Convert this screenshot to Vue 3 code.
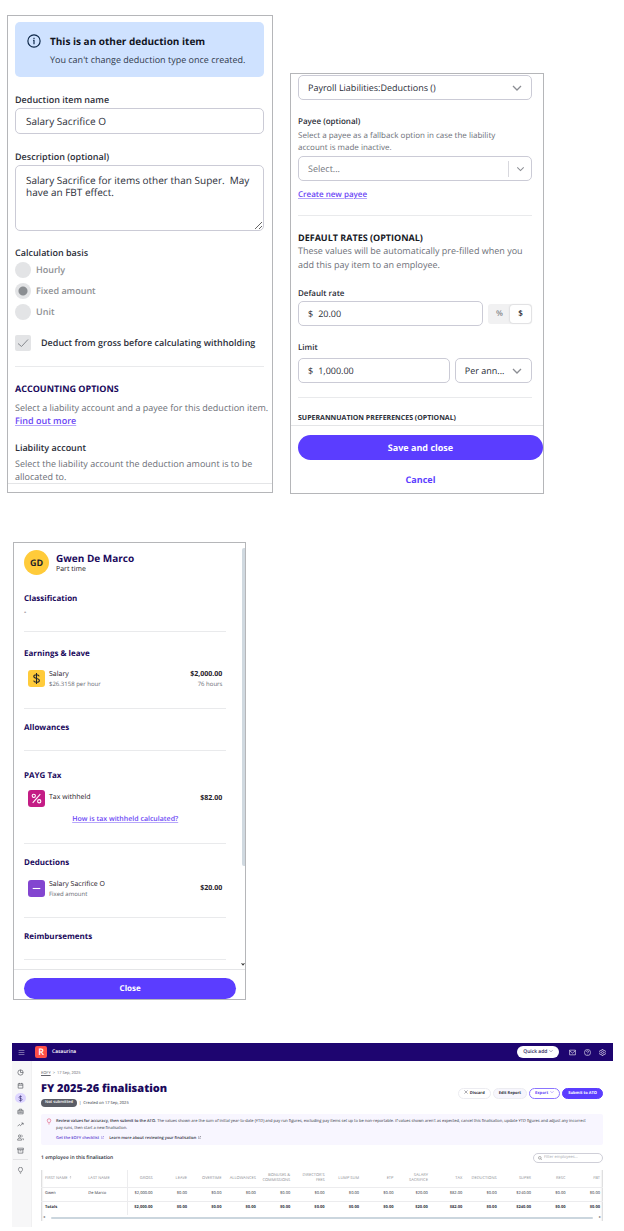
<script setup>
import { ref } from 'vue'

const name = ref('Salary Sacrifice O')
const description = ref('Salary Sacrifice for items other than Super.  May have an FBT effect.')
const basis = ref('Fixed amount')
const bases = ['Hourly', 'Fixed amount', 'Unit']
const rate = ref('20.00')
const limit = ref('1,000.00')
const filter = ref('')

const columns = [
  { label: 'GROSS', value: '$2,000.00' },
  { label: 'LEAVE', value: '$0.00' },
  { label: 'OVERTIME', value: '$0.00' },
  { label: 'ALLOWANCES', value: '$0.00' },
  { label: 'BONUSES &\nCOMMISSIONS', value: '$0.00' },
  { label: "DIRECTOR'S\nFEES", value: '$0.00' },
  { label: 'LUMP SUM', value: '$0.00' },
  { label: 'ETP', value: '$0.00' },
  { label: 'SALARY\nSACRIFICE', value: '$20.00' },
  { label: 'TAX', value: '$82.00' },
  { label: 'DEDUCTIONS', value: '$0.00' },
  { label: 'SUPER', value: '$240.00' },
  { label: 'RESC', value: '$0.00' },
  { label: 'FBT', value: '$0.00' },
]

const navIcons = [
  { label: 'Dashboard', d: 'M12 3a9 9 0 1 0 9 9A9 9 0 0 0 12 3v9h9' },
  { label: 'Calendar', d: 'M4 6h16v15H4zM4 11h16M8 3v4M16 3v4' },
  { label: 'Payroll', d: 'M17 7c-1-2-3-2.500-5-2.500-3 0-5 1.500-5 3.700 0 5.300 10.500 2.300 10.500 7.600 0 2.300-2.300 3.700-5.500 3.700-2.500 0-4.500-.7-5.500-3M12 1.500v21', active: true },
  { label: 'Business', d: 'M3 8h18v12H3zM8 8V4h8v4M3 14h18M10 12v4M14 12v4' },
  { label: 'Reports', d: 'M2 18l6-6 4 4 9-9M15 7h6v6' },
  { label: 'People', d: 'M9 11a4 4 0 1 0 0-8 4 4 0 0 0 0 8M2 21c0-5 3-7 7-7s7 2 7 7zM16 3.500a4 4 0 0 1 0 7M19 14c2 1 3 3 3 7' },
  { label: 'Archive', d: 'M2 4h20v5H2zM4 9v12h16V9M9 13h6' },
]
</script>

<template>
  <main class="page">
    <div class="forms">
      <section class="card deduction">
        <div class="banner">
          <svg class="info" viewBox="0 0 24 24" fill="none" stroke="currentColor" stroke-width="2"><circle cx="12" cy="12" r="10.500" /><path d="M10.500 11H12v6.500M12 6.500v2" /></svg>
          <div>
            <h2>This is an other deduction item</h2>
            <p>You can't change deduction type once created.</p>
          </div>
        </div>

        <label class="label" for="item-name">Deduction item name</label>
        <input id="item-name" v-model="name" class="field" type="text" />

        <label class="label" for="item-desc">Description (optional)</label>
        <textarea id="item-desc" v-model="description" class="field area"></textarea>

        <fieldset class="basis">
          <legend class="label">Calculation basis</legend>
          <label v-for="b in bases" :key="b" class="radio">
            <input v-model="basis" type="radio" name="basis" :value="b" disabled />{{ b }}
          </label>
        </fieldset>

        <label class="check">
          <span class="tick">
            <input type="checkbox" checked disabled />
            <svg viewBox="0 0 16 16" fill="none" stroke="currentColor" stroke-width="1"><path d="M3 8.500l3.500 3L13 4.500" /></svg>
          </span>
          Deduct from gross before calculating withholding
        </label>

        <hr />
        <h3 class="caps">ACCOUNTING OPTIONS</h3>
        <p class="para single">Select a liability account and a payee for this deduction item.<br /><a class="link" href="#find">Find out more</a></p>
        <h4 class="label liability">Liability account</h4>
        <p class="para hint">Select the liability account the deduction amount is to be allocated to.</p>
        <div class="edge"></div>
      </section>

      <section class="card rates">
        <div class="inner">
          <div class="select">
            <select aria-label="Liability account"><option>Payroll Liabilities:Deductions ()</option></select>
            <svg viewBox="0 0 10 10"><path d="M1 3l4 4 4-4" /></svg>
          </div>
          <label class="label payee" for="payee">Payee (optional)</label>
          <p class="small">Select a payee as a fallback option in case the liability<br />account is made inactive.</p>
          <div class="select split">
            <select id="payee"><option>Select...</option></select>
            <svg viewBox="0 0 10 10"><path d="M1 3l4 4 4-4" /></svg>
          </div>
          <a class="link create" href="#payee">Create new payee</a>
          <hr class="rule-a" />
          <h3 class="caps dark">DEFAULT RATES (OPTIONAL)</h3>
          <p class="lead">These values will be automatically pre-filled when you add this pay item to an employee.</p>

          <label class="label rate-label" for="rate">Default rate</label>
          <div class="line">
            <div class="money"><span>$</span><input id="rate" v-model="rate" type="text" /></div>
            <div class="toggle"><button type="button">%</button><button type="button" class="on">$</button></div>
          </div>
          <label class="label rate-label" for="limit">Limit</label>
          <div class="line limit">
            <div class="money"><span>$</span><input id="limit" v-model="limit" type="text" /></div>
            <div class="select period">
              <select aria-label="Limit period"><option>Per ann...</option></select>
              <svg viewBox="0 0 10 10"><path d="M1 3l4 4 4-4" /></svg>
            </div>
          </div>
          <hr class="rule-b" />
          <h4 class="super">SUPERANNUATION PREFERENCES (OPTIONAL)</h4>
        </div>
        <div class="footer">
          <button type="button" class="primary">Save and close</button>
          <button type="button" class="cancel">Cancel</button>
        </div>
      </section>
    </div>

    <section class="card employee">
      <div class="scroller">
        <header class="person">
          <span class="avatar">GD</span>
          <div><h2>Gwen De Marco</h2><p>Part time</p></div>
        </header>
        <h3 class="sect first">Classification</h3>
        <p class="dash">-</p>
        <hr class="e1" />
        <h3 class="sect e2">Earnings &amp; leave</h3>
        <div class="item">
          <span class="tile yellow"><svg viewBox="0 0 24 24"><path d="M17 8c-.5-2-2.500-3-5-3-3 0-5 1.300-5 3.400 0 5 10.300 2.200 10.300 7.200 0 2.100-2.300 3.400-5.300 3.400-2.700 0-4.800-1-5.300-3.200M12 2v20" /></svg></span>
          <div class="what"><b>Salary</b><span>$26.3158 per hour</span></div>
          <div class="amount"><b>$2,000.00</b><span>76 hours</span></div>
        </div>
        <hr class="e3" />
        <h3 class="sect e4">Allowances</h3>
        <hr class="e5" />
        <h3 class="sect e6">PAYG Tax</h3>
        <div class="item tax">
          <span class="tile pink"><svg viewBox="0 0 24 24"><circle cx="7" cy="7" r="3" /><circle cx="17" cy="17" r="3" /><path d="M19 4L5 20" /></svg></span>
          <div class="what"><b>Tax withheld</b></div>
          <div class="amount mid"><b>$82.00</b></div>
        </div>
        <p class="how"><a class="link" href="#tax">How is tax withheld calculated?</a></p>
        <hr class="e7" />
        <h3 class="sect e4">Deductions</h3>
        <div class="item ded">
          <span class="tile violet"><svg viewBox="0 0 24 24"><path d="M5 12h14" /></svg></span>
          <div class="what"><b>Salary Sacrifice O</b><span>Fixed amount</span></div>
          <div class="amount mid"><b>$20.00</b></div>
        </div>
        <hr class="e7" />
        <h3 class="sect e4">Reimbursements</h3>
        <hr class="e5" />
        <span class="thumb"></span>
        <svg class="down" viewBox="0 0 6 4"><path d="M0 0h2l1 1.500L4 0h2L3 4z" /></svg>
      </div>
      <div class="close-bar"><button type="button" class="primary close">Close</button></div>
    </section>

    <section class="app">
      <header class="topbar">
        <button type="button" class="burger" aria-label="Menu"><svg viewBox="0 0 12 12"><path d="M1 2.500h10M1 6h10M1 9.500h10" /></svg></button>
        <span class="logo">R</span>
        <span class="org">Casaurina</span>
        <button type="button" class="quick">Quick add <svg viewBox="0 0 10 10"><path d="M1 3l4 4 4-4" /></svg></button>
        <svg class="top-icon" viewBox="0 0 24 24"><path d="M2 4h20v16H2zM2 6l10 8 10-8" /></svg>
        <svg class="top-icon" viewBox="0 0 24 24"><circle cx="12" cy="12" r="10.500" /><path d="M8.500 9.500c0-5 7-4.500 7-.5 0 2.500-3.500 2.500-3.500 5M12 16.500v2" /></svg>
        <svg class="top-icon" viewBox="0 0 24 24"><circle cx="12" cy="12" r="3.500" /><path d="M10 1.500h4l.7 3 2.800 1.400 3-1 2 3.500-2.300 2.200v2.800l2.300 2.200-2 3.500-3-1-2.800 1.400-.7 3h-4l-.7-3-2.800-1.400-3 1-2-3.500 2.300-2.200v-2.800L1.500 8.400l2-3.500 3 1 2.800-1.400z" /></svg>
      </header>

      <nav class="side">
        <a v-for="n in navIcons" :key="n.label" href="#nav" :class="{ active: n.active }" :aria-label="n.label"><svg viewBox="0 0 24 24"><path :d="n.d" /></svg></a>
        <hr />
        <a href="#tips" aria-label="Tips"><svg viewBox="0 0 24 24"><path d="M9 17c0-3-4-4-4-9a7 7 0 0 1 14 0c0 5-4 6-4 9zM10 21h4" /></svg></a>
      </nav>

      <div class="content">
        <div class="head">
          <div>
            <p class="crumbs"><a href="#eofy">EOFY</a><i>&gt;</i>17 Sep, 2025</p>
            <h1>FY 2025-26 finalisation</h1>
            <p class="status"><span class="pill">Not submitted</span><i>|</i>Created on 17 Sep, 2025</p>
          </div>
          <div class="actions">
            <button type="button"><svg viewBox="0 0 10 10"><path d="M1 1l8 8M9 1L1 9" /></svg>Discard</button>
            <button type="button" class="soft">Edit Report</button>
            <button type="button" class="outline">Export<svg viewBox="0 0 10 10"><path d="M1 3l4 4 4-4" /></svg></button>
            <button type="button" class="solid">Submit to ATO</button>
          </div>
        </div>

        <div class="notice">
          <svg class="bulb" viewBox="0 0 24 24"><path d="M9 17c0-3-4-4-4-9a7 7 0 0 1 14 0c0 5-4 6-4 9zM10 22h4" /></svg>
          <div>
            <p><b>Review values for accuracy, then submit to the ATO.</b> The values shown are the sum of initial year-to-date (YTD) and pay run figures, excluding pay items set up to be non-reportable. If values shown aren't as expected, cancel this finalisation, update YTD figures and adjust any incorrect<br />pay runs, then start a new finalisation.</p>
            <p class="links">
              <a class="violet" href="#list">Get the EOFY checklist <svg viewBox="0 0 10 10"><path d="M4 2H1v7h7V6M6 1h3v3M9 1L5 5" /></svg></a>
              <a href="#more">Learn more about reviewing your finalisation <svg viewBox="0 0 10 10"><path d="M4 2H1v7h7V6M6 1h3v3M9 1L5 5" /></svg></a>
            </p>
          </div>
        </div>

        <div class="tools">
          <h2>1 employee in this finalisation</h2>
          <label class="search">
            <svg viewBox="0 0 24 24"><circle cx="11" cy="11" r="8" /><path d="M17 17l6 6" /></svg>
            <input v-model="filter" type="text" placeholder="Filter employees..." aria-label="Filter employees" />
          </label>
        </div>

        <div class="grid">
          <table>
            <colgroup><col class="c-name" /><col class="c-name" /><col class="c-gross" /><col v-for="n in 13" :key="n" /></colgroup>
            <thead>
              <tr>
                <th>FIRST NAME <svg viewBox="0 0 10 10"><path d="M5 9V1M2 4l3-3 3 3" /></svg></th>
                <th class="last">LAST NAME</th>
                <th v-for="c in columns" :key="c.label" class="num">{{ c.label }}</th>
              </tr>
            </thead>
            <tbody>
              <tr><td>Gwen</td><td class="last">De Marco</td><td v-for="c in columns" :key="c.label" class="num">{{ c.value }}</td></tr>
              <tr class="total"><td>Totals</td><td class="last"></td><td v-for="c in columns" :key="c.label" class="num">{{ c.value }}</td></tr>
            </tbody>
          </table>
          <div class="hbar"><i>◂</i><span></span><i>▸</i></div>
        </div>
      </div>
    </section>
  </main>
</template>

<style>
body { margin: 0; background: #fff; }
</style>

<style scoped>
.page, .page * { box-sizing: border-box; }
.page {
  padding: 15px 0 3px;
  font-family: "Open Sans", "Noto Sans", sans-serif;
  font-size: 9px;
  line-height: 12px;
  color: #2b2e38;
  text-rendering: geometricPrecision;
}
h1, h2, h3, h4, p, fieldset, legend { margin: 0; padding: 0; border: 0; }
button, input, select, textarea { font: inherit; color: inherit; margin: 0; text-rendering: inherit; }
button { cursor: pointer; padding: 0; border: 0; background: none; }
hr { border: 0; height: 1px; margin: 0; background: #e9eaec; }
svg { fill: none; stroke: currentColor; }
.card { border: 1px solid #b5b6b9; background: #fff; overflow: hidden; }
.forms {
  display: grid;
  grid-template-columns: minmax(0, 266fr) minmax(0, 254fr);
  gap: 17px;
  align-items: start;
  padding: 0 80px 0 7px;
}
.label { display: block; font-size: 9px; font-weight: 600; line-height: 12px; }
.link { color: #6a45f5; font-weight: 600; text-decoration: underline; text-decoration-color: #b6a6fb; text-underline-offset: 1px; }
.caps { font-size: 9px; font-weight: 700; line-height: 14px; color: #1b0a5c; }
.dark { color: #17191f; }

.deduction { padding: 6px 8px 8px 7px; }
.banner { display: flex; gap: 9px; padding: 12px 12px 10px; border-radius: 5px; background: #cfe2ff; }
.info { width: 14px; height: 14px; flex: none; color: #0d2748; }
.banner h2 { font-size: 10px; line-height: 14px; font-weight: 700; color: #11151f; }
.banner p { margin-top: 5px; font-size: 9px; line-height: 14px; color: #2f3a4c; }
.deduction > .label { margin-top: 17px; }
.field { display: block; width: 100%; height: 26px; margin-top: 2px; padding: 0 10px; border: 1px solid #cbcbd6; border-radius: 5px; background: #fff; font-size: 10px; outline: 0; }
.area { height: 66px; padding: 8px 10px; line-height: 12px; resize: vertical; }
.basis { margin-top: 16px; }
.basis .label { margin-bottom: 3px; }
.radio { display: flex; align-items: center; gap: 5px; height: 16px; margin-bottom: 5px; color: #8e9094; font-weight: 600; }
.radio input { appearance: none; width: 16px; height: 16px; border-radius: 50%; background: #e3e4e6; }
.radio input:checked { background: radial-gradient(circle, #8b8e92 0 4px, #e3e4e6 5px); }
.check { display: flex; align-items: center; gap: 10px; height: 16px; margin-top: 10px; font-weight: 600; white-space: nowrap; }
.tick { display: grid; flex: none; width: 16px; height: 16px; }
.tick > * { grid-area: 1 / 1; width: 16px; height: 16px; }
.tick input { appearance: none; border-radius: 2px; background: #e3e4e6; }
.tick svg { color: #85888d; }
.deduction hr { margin: 15px 0; }
.para { margin-top: 5px; line-height: 13px; color: #6c6f77; }
.single { white-space: nowrap; }
.liability.liability { margin-top: 15px; }
.hint { margin-top: 3px; }
.edge { height: 1px; margin: 0 -8px 0 -7px; background: #e4e5e7; }

.rates { margin-top: 58px; padding: 1px 0 6px; }
.inner { padding: 0 11px 0 7px; }
.select { display: grid; align-items: center; }
.select > * { grid-area: 1 / 1; }
.select select { appearance: none; width: 100%; height: 25px; padding: 0 22px 0 9px; border: 1px solid #cbcbd6; border-radius: 5px; background: #fff; font-size: 9px; outline: 0; }
.select svg { justify-self: end; width: 10px; height: 10px; margin-right: 10px; color: #8b8d93; stroke-width: 1.3; pointer-events: none; }
.split select { color: #74777e; }
.split svg { width: 24px; height: 16px; margin-right: 0; padding: 4px 0; border-left: 1px solid #d8d8de; }
.period.period select { padding-right: 18px; }
.payee { margin-top: 16px; font-size: 8px; }
.small { margin: 2px 0; font-size: 8px; line-height: 12px; color: #6c6f77; }
.create { display: block; margin-top: 8px; font-size: 8px; }
.rule-a { margin: 14px 0 15px; }
.rates .caps { line-height: 13px; }
.lead { margin-right: -4px; line-height: 14px; color: #6c6f77; }
.rate-label { margin-top: 16px; font-size: 8px; }
.line { display: flex; align-items: center; gap: 5px; margin-top: 1px; }
.limit { margin-top: 4px; }
.money { display: flex; align-items: center; flex: 1; gap: 5px; height: 25px; padding: 0 9px; border: 1px solid #cbcbd6; border-radius: 5px; }
.money input { flex: 1; width: 0; padding: 0; border: 0; outline: 0; background: none; }
.toggle { display: flex; height: 20px; padding: 1px; border-radius: 3px; background: #f1f1f2; font-size: 8px; font-weight: 600; }
.toggle button { width: 21px; color: #85878c; }
.toggle .on { color: #24262c; border-radius: 3px; background: #fff; box-shadow: 0 0 2px #b9babd; }
.period { flex: 0 0 33%; }
.rule-b { margin: 14px 0 16px; }
.super { font-size: 7px; line-height: 10px; font-weight: 700; white-space: nowrap; }
.footer { margin-top: 1px; padding: 9px 0 0 7px; border-top: 1px solid #e4e5e7; }
.primary { display: block; width: 100%; height: 25px; border-radius: 13px; background: #5b3dff; color: #fff; font-weight: 700; }
.cancel { display: block; width: 100%; margin-top: 13px; line-height: 14px; font-weight: 700; color: #5b3dff; }

.employee { width: 37.4%; margin: 48px 0 0 13px; color: #1f2228; }
.scroller { position: relative; padding: 7px 19px 9px 10px; }
.person { display: flex; align-items: flex-start; gap: 7px; }
.avatar { width: 25px; height: 25px; flex: none; border-radius: 50%; background: #ffcb3a; text-align: center; font-size: 9px; font-weight: 700; line-height: 25px; }
.person h2 { margin-top: 1px; font-size: 10px; line-height: 14px; color: #1b0a5c; }
.person p { font-size: 7px; line-height: 10px; }
.sect { font-size: 8px; line-height: 12px; color: #1b0a5c; }
.first { margin-top: 18px; }
.dash { margin-top: 3px; line-height: 10px; font-size: 7px; }
.e1 { margin-top: 13px; }
.e2 { margin-top: 16px; }
.e3 { margin-top: 19px; }
.e4 { margin-top: 13px; }
.e5 { margin-top: 16px; }
.e6 { margin-top: 19px; }
.e7 { margin-top: 18px; }
.item { display: flex; gap: 4px; height: 19px; margin-top: 10px; padding: 0 4px; font-size: 7px; }
.tax { margin-top: 8px; height: 25px; }
.ded { margin-top: 11px; }
.tile { display: grid; place-items: center; flex: none; width: 17px; height: 17px; border-radius: 3px; }
.tile svg { width: 13px; height: 13px; stroke-width: 2; }
.yellow { background: #ffcb3a; }
.pink { background: #c41d85; color: #fff; }
.tile.violet { background: #8345d0; color: #fff; }
.what, .amount { display: flex; flex-direction: column; line-height: 10px; }
.what { flex: 1; }
.tax .what { margin-top: 3px; }
.what b { font-weight: 400; }
.what span, .amount span { font-size: 6px; line-height: 9px; color: #666971; }
.amount { text-align: right; }
.amount b { font-weight: 700; }
.amount.mid { margin-top: 4px; }
.how { text-align: center; font-size: 7px; line-height: 10px; }
.thumb { position: absolute; top: 5px; right: 0; width: 3px; height: 318px; border-radius: 2px 0 0 2px; background: #d0d9e0; }
.down { position: absolute; right: 0; bottom: 3px; width: 4px; height: 3px; fill: #333; stroke: none; }
.close-bar { padding: 8px 9px 0 10px; border-top: 1px solid #e4e5e7; }
.close { height: 21px; font-size: 8px; border-radius: 11px; }

.app {
  display: grid;
  grid-template-columns: 20px minmax(0, 1fr);
  margin: 43px 11px 0 12px;
  font-size: 4px;
  line-height: 7px;
}
.topbar { grid-column: 1 / -1; display: flex; align-items: center; height: 18px; padding-right: 7px; background: #1e0570; color: #fff; }
.burger { width: 20px; height: 10px; }
.burger svg { display: block; width: 7px; height: 7px; margin: 1px 6px; opacity: 0.7; }
.logo { width: 12px; height: 12px; margin: 0 5px 0 3px; border-radius: 2px; background: #ff4f48; text-align: center; font-size: 9px; font-weight: 600; line-height: 12px; }
.org { flex: 1; font-size: 5px; font-weight: 600; }
.quick { width: 42px; height: 12px; border-radius: 6px; background: #fff; color: #28245a; font-size: 5px; font-weight: 600; line-height: 12px; }
.quick svg { width: 4px; height: 4px; }
.top-icon { width: 7px; height: 7px; margin-left: 8px; stroke-width: 2; }
.quick + .top-icon { margin-left: 10px; }
.side { display: flex; flex-direction: column; align-items: center; gap: 3px; padding: 6px 2px 0 0; background: #f7f7f8; border-right: 1px solid #f0f0f1; }
.side a { display: grid; place-items: center; width: 11px; height: 10px; border-radius: 50%; color: #44464d; }
.side .active { background: #ddd5ff; color: #29206a; }
.side svg { width: 7px; height: 7px; stroke-width: 2; }
.side hr { width: 15px; margin: 1px 0 2px; background: #e2e2e4; }
.content { padding: 10px 10px 6px 9px; min-width: 0; }
.head { display: flex; justify-content: space-between; align-items: flex-end; }
.crumbs { line-height: 6px; color: #62646b; }
.crumbs a { color: inherit; }
i { font-style: normal; }
.crumbs i { margin: 0 2px; }
h1 { margin: 5px 0 3px; font-size: 11px; line-height: 14px; font-weight: 800; color: #1b0a5c; }
.status { display: flex; align-items: center; height: 8px; }
.status i { margin: 0 2px; }
.pill { height: 8px; padding: 0 4px; border-radius: 4px; background: #5a5d66; color: #fff; font-weight: 600; line-height: 8px; }
.actions { display: flex; gap: 2px; margin-bottom: 8px; }
.actions button { height: 11px; padding: 0 5px; border: 1px solid #ececf1; border-radius: 6px; font-weight: 700; line-height: 9px; color: #33333f; white-space: nowrap; }
.actions svg { width: 4px; height: 4px; margin: 0 2px 0 0; }
.actions .soft { background: #f7f6fd; }
.actions .outline { border-color: #8b75ff; color: #6a45f5; }
.actions .outline svg { margin: 0 0 0 2px; }
.actions .solid { border-color: #5b3dff; background: #5b3dff; color: #fff; }
.notice { display: flex; gap: 4px; margin-top: 7px; padding: 4px 4px 3px 5px; border-radius: 2px; background: #f8f6ff; }
.notice > div { white-space: nowrap; }
.notice b { font-weight: 600; }
.bulb { width: 6px; height: 7px; flex: none; color: #d9345a; stroke-width: 2; }
.links { display: flex; gap: 5px; margin-top: 3px; font-weight: 600; }
.links a { color: #33333f; text-decoration: none; }
.links .violet { color: #5a3bd0; }
.links svg { width: 3px; height: 3px; margin-left: 1px; stroke-width: 1; }
.tools { display: flex; justify-content: space-between; align-items: center; margin-top: 8px; }
.tools h2 { font-size: 5px; line-height: 7px; font-weight: 600; }
.search { display: flex; align-items: center; gap: 2px; width: 70px; height: 10px; padding: 0 4px; border: 1px solid #cfcfd8; border-radius: 5px; }
.search svg { width: 4px; height: 4px; flex: none; stroke-width: 3; color: #666; }
.search input { flex: 1; width: 0; padding: 0; border: 0; outline: 0; line-height: 6px; height: 6px; background: none; }
.search input::placeholder { color: #a5a6ac; }
.grid { margin-top: 7px; box-shadow: inset 3px 0 2px -2px #d4d4d6, inset -3px 0 2px -2px #d4d4d6; }
table { width: 100%; table-layout: fixed; border-collapse: collapse; }
.c-name { width: 7.7%; }
.c-gross { width: 5%; }
th { height: 17px; padding: 0 0 0 4px; text-align: left; font-size: 4px; line-height: 5px; font-weight: 400; color: #8b8d93; white-space: pre-line; }
th svg { width: 3px; height: 3px; }
td { height: 14px; padding: 0 0 0 4px; border-top: 1px solid #ececee; line-height: 6px; }
.num { padding: 0 3px 0 0; text-align: right; }
.last { border-right: 1px solid #ececee; }
.total td { font-weight: 700; }
.hbar { display: flex; align-items: center; height: 6px; color: #777; line-height: 4px; padding: 0 2px; gap: 6px; }
.hbar span { flex: 1; height: 2px; border-radius: 1px; background: #cbd6de; }
</style>
